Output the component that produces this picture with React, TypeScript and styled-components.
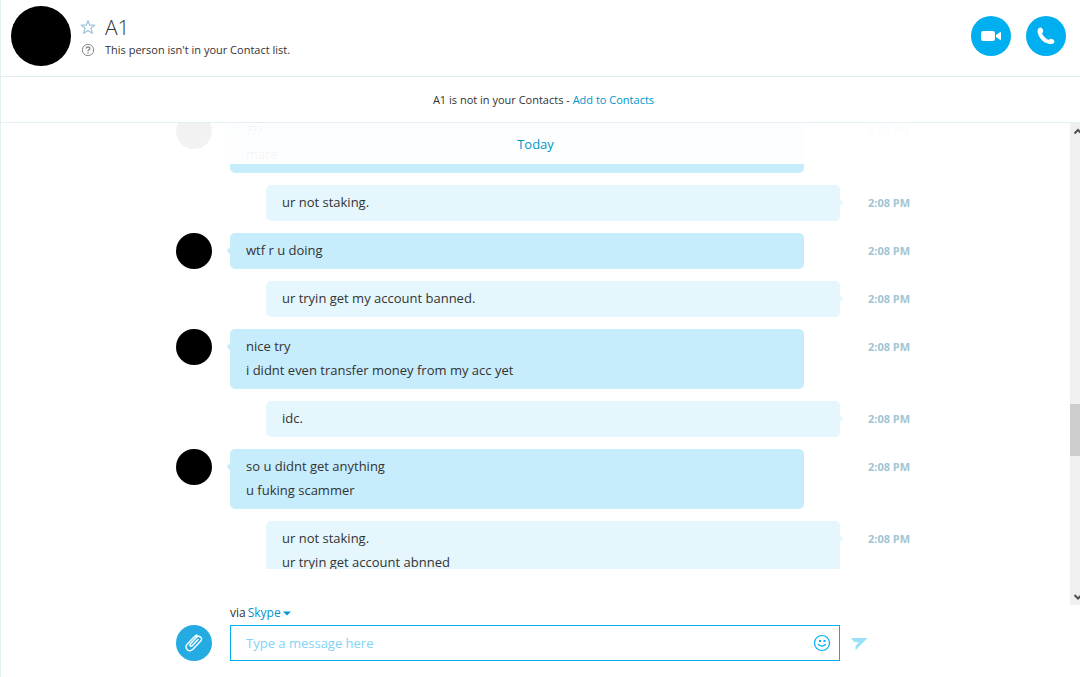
import React from "react";
import styled, { createGlobalStyle } from "styled-components";

const GlobalStyle = createGlobalStyle`
  *, *::before, *::after { box-sizing: border-box; }
  body {
    margin: 0;
    background: #fff;
    color: #333;
    font-family: "Open Sans", "Noto Sans", sans-serif;
    font-size: 13px;
    line-height: 24px;
  }
  button, input { font: inherit; }
`;

const Shell = styled.main`
  display: flex;
  flex-direction: column;
  height: 100vh;
  overflow: hidden;
  box-shadow: inset 1px 0 #e2eef2;
`;

const Header = styled.header`
  display: flex;
  align-items: flex-start;
  padding: 6px 14px 10px 11px;
  border-bottom: 1px solid #e2eef2;
`;

const Avatar = styled.div<{ $size: number }>`
  flex: none;
  width: ${(p) => p.$size}px;
  height: ${(p) => p.$size}px;
  border-radius: 50%;
  background: #000;
`;

const Person = styled.div`
  flex: 1;
  display: grid;
  grid-template-columns: 16px 1fr;
  grid-template-rows: 28px 18px;
  column-gap: 9px;
  align-items: center;
  margin: 7px 0 0 9px;
`;

const IconButton = styled.button`
  display: flex;
  padding: 0;
  border: 0;
  background: none;
`;

const Name = styled.h1`
  margin: 0;
  font-size: 21px;
  font-weight: 300;
  line-height: 28px;
`;

const Status = styled.p`
  margin: 0;
  font-size: 11px;
  line-height: 18px;
`;

const CallActions = styled.div`
  display: flex;
  gap: 15px;
  padding-top: 10px;
`;

const RoundButton = styled.button<{ $size: number; $color: string }>`
  display: grid;
  place-items: center;
  width: ${(p) => p.$size}px;
  height: ${(p) => p.$size}px;
  padding: 0;
  border: 0;
  border-radius: 50%;
  background: ${(p) => p.$color};
`;

const Notice = styled.p`
  margin: 0;
  padding: 11px 0 10px 7px;
  border-bottom: 1px solid #e2f1f5;
  font-size: 11px;
  text-align: center;
`;

const TextLink = styled.a`
  color: #0095cc;
  text-decoration: none;
`;

const Conversation = styled.section`
  flex: 1;
  min-height: 0;
  display: flex;
`;

const Viewport = styled.div`
  position: relative;
  flex: 1;
  min-width: 0;
  margin-bottom: 36px;
  overflow: hidden;
`;

const DayBanner = styled.div`
  position: absolute;
  inset: 0 0 auto 1px;
  z-index: 2;
  padding: 9px 0 8px;
  background: rgba(255, 255, 255, 0.95);
  color: #0095cc;
  text-align: center;
`;

const Messages = styled.ol`
  display: flex;
  flex-direction: column;
  gap: 12px;
  margin: -10px 0 0;
  padding: 0;
  list-style: none;
`;

const columns = `
  display: grid;
  grid-template-columns: minmax(72px, 1fr) minmax(0, 610px) minmax(72px, 1fr);
`;

const MessageRow = styled.li`
  ${columns}
`;

const Side = styled.div`
  display: flex;
  justify-content: flex-end;
  padding-right: 18px;
`;

const Bubble = styled.div<{ $mine: boolean }>`
  position: relative;
  margin: ${(p) => (p.$mine ? "0 0 0 36px" : "0 36px 0 0")};
  padding: 5px 16px 7px;
  border-radius: 5px;
  background: ${(p) => (p.$mine ? "#e5f6fd" : "#c7ecfc")};

  &::before {
    content: "";
    position: absolute;
    top: 14px;
    ${(p) => (p.$mine ? "right" : "left")}: -2px;
    width: 7px;
    height: 7px;
    background: inherit;
    transform: rotate(45deg);
  }
`;

const Line = styled.p`
  margin: 0;
`;

const Time = styled.time`
  padding: 6px 0 0 28px;
  color: #a2c4d4;
  font-size: 11px;
  font-weight: 700;
`;

const ScrollTrack = styled.div`
  flex: none;
  display: flex;
  flex-direction: column;
  width: 10px;
  overflow: hidden;
  background: #f0f0f0;

  svg { flex: none; }
`;

const TrackSpace = styled.div<{ $grow: number }>`
  flex: ${(p) => p.$grow};
`;

const Thumb = styled.div`
  height: 52px;
  background: #cdcdcd;
`;

const Composer = styled.form`
  ${columns}
  align-items: center;
  padding: 0 10px 16px 0;
`;

const Via = styled.div`
  grid-area: 1 / 2;
  display: flex;
  align-items: center;
  gap: 2px;
  height: 20px;
  padding-bottom: 4px;
  font-size: 12px;
`;

const ViaButton = styled.button`
  display: flex;
  align-items: center;
  gap: 2px;
  padding: 0;
  border: 0;
  background: none;
  color: #0095cc;
`;

const Attach = styled(Side)`
  grid-area: 2 / 1;
`;

const Field = styled.div`
  grid-area: 2 / 2;
  display: flex;
  align-items: center;
  height: 36px;
  padding: 0 8px 0 15px;
  border: 1px solid #00aff0;
`;

const MessageInput = styled.input`
  flex: 1;
  min-width: 0;
  padding: 0;
  border: 0;
  outline: 0;
  background: none;
  color: #333;

  &::placeholder {
    color: #80d4f7;
    opacity: 1;
  }
`;

const Send = styled.div`
  grid-area: 2 / 3;
  padding: 2px 0 0 11px;
`;

const StarIcon = () => (
  <svg width="16" height="16" viewBox="0 0 16 16" fill="none" stroke="#a2c8dc" strokeWidth="1.3" strokeLinejoin="round">
    <path d="M8 1.700 9.800 6.200h4.900L10.900 9.300l1.500 4.900L8 11.600l-4.400 2.600 1.500-4.900L1.300 6.200h4.900z" />
  </svg>
);

const HelpIcon = () => (
  <svg width="16" height="16" viewBox="0 0 16 16" fill="none" stroke="#8a8d90">
    <circle cx="8" cy="8" r="5.700" />
    <path d="M6.200 6.600C6.200 4.500 9.900 4.500 9.900 6.500 9.900 7.700 8 7.700 8 9.200" strokeWidth="1.400" />
    <path d="M8 10.200v1.300" strokeWidth="1.400" />
  </svg>
);

const VideoIcon = () => (
  <svg width="22" height="12" viewBox="0 0 22 12" fill="#fff">
    <rect x="1" y="1" width="14" height="10" rx="2" />
    <path d="M16 5 20 2.200q1-.5 1 .6v6.400q0 1.100-1 .6L16 7z" />
  </svg>
);

const PhoneIcon = () => (
  <svg width="20" height="20" viewBox="0 0 20 20" fill="#fff">
    <path d="M2.400 2.600Q4.500.6 6.300 2.500 8 5 6.700 6.500 5.900 7.300 6.300 8.300 8.500 12 11.900 13.700q.9.300 1.700-.4 1.500-1.200 3.600.2 2.100 1.500.9 3.300-1.300 1.700-4.600 1.200C7 16.700 2.700 12 1.600 6.300q-.3-2.500.8-3.700z" />
  </svg>
);

const ClipIcon = () => (
  <svg width="20" height="20" viewBox="0 0 20 20" fill="none" stroke="#fff" strokeWidth="1.400" strokeLinecap="round" strokeLinejoin="round">
    <path d="M14 6.500 8.200 12.700c-1.300 1.300-3.100-.3-1.900-1.700l6.200-6.700c2.800-2.700 6.700.9 4.200 3.800l-7.800 8.200c-3.900 3.500-9-.8-5.800-5L9.600 4.600q1.700-1.900 3.400-2.600" />
  </svg>
);

const SmileIcon = () => (
  <svg width="18" height="18" viewBox="0 0 18 18" fill="none" stroke="#00aff0" strokeWidth="1.200">
    <circle cx="9" cy="9" r="7.500" />
    <path d="M5.500 10.500q3.500 3.200 7 0" strokeLinecap="round" />
    <path d="M6 7h2M10.500 7h2" strokeWidth="2" />
  </svg>
);

const SendIcon = () => (
  <svg width="18" height="14" viewBox="0 0 18 14" fill="#99e0fb">
    <path d="M0 1h16.500L4.500 13.300V9L8 5.200 3 5z" />
  </svg>
);

const CaretIcon = () => (
  <svg width="8" height="5" viewBox="0 0 8 5" fill="#0095cc">
    <path d="M0 .5h8L4 4.500z" />
  </svg>
);

const ArrowIcon = ({ down }: { down?: boolean }) => (
  <svg width="17" height="17" viewBox="0 0 17 17" fill="none" stroke="#505050" strokeWidth="2">
    <path d={down ? "M4.500 7l3.500 3.500 3.500-3.500" : "M4.500 10.500L8 7l3.500 3.500"} />
  </svg>
);

type Message = { mine?: boolean; lines: string[] };

const messages: Message[] = [
  { lines: ["???", "mate"] },
  { mine: true, lines: ["ur not staking."] },
  { lines: ["wtf r u doing"] },
  { mine: true, lines: ["ur tryin get my account banned."] },
  { lines: ["nice try", "i didnt even transfer money from my acc yet"] },
  { mine: true, lines: ["idc."] },
  { lines: ["so u didnt get anything", "u fuking scammer"] },
  { mine: true, lines: ["ur not staking.", "ur tryin get account abnned"] },
];

export default function App() {
  return (
    <Shell>
      <GlobalStyle />
      <Header>
        <Avatar $size={60} />
        <Person>
          <IconButton aria-label="Add to favorites"><StarIcon /></IconButton>
          <Name>A1</Name>
          <HelpIcon />
          <Status>This person isn't in your Contact list.</Status>
        </Person>
        <CallActions>
          <RoundButton $size={40} $color="#00aff0" aria-label="Video call"><VideoIcon /></RoundButton>
          <RoundButton $size={40} $color="#00aff0" aria-label="Call"><PhoneIcon /></RoundButton>
        </CallActions>
      </Header>
      <Notice>
        A1 is not in your Contacts - <TextLink href="#add">Add to Contacts</TextLink>
      </Notice>
      <Conversation>
        <Viewport>
          <DayBanner>Today</DayBanner>
          <Messages>
            {messages.map((m, i) => (
              <MessageRow key={i}>
                <Side>{!m.mine && <Avatar $size={36} />}</Side>
                <Bubble $mine={!!m.mine}>
                  {m.lines.map((line) => <Line key={line}>{line}</Line>)}
                </Bubble>
                <Time>2:08 PM</Time>
              </MessageRow>
            ))}
          </Messages>
        </Viewport>
        <ScrollTrack aria-hidden="true">
          <ArrowIcon />
          <TrackSpace $grow={2} />
          <Thumb />
          <TrackSpace $grow={1} />
          <ArrowIcon down />
        </ScrollTrack>
      </Conversation>
      <Composer onSubmit={(e) => e.preventDefault()}>
        <Via>
          via <ViaButton type="button">Skype <CaretIcon /></ViaButton>
        </Via>
        <Attach>
          <RoundButton type="button" $size={36} $color="#24abe2" aria-label="Attach a file"><ClipIcon /></RoundButton>
        </Attach>
        <Field>
          <MessageInput type="text" aria-label="Message" placeholder="Type a message here" />
          <IconButton type="button" aria-label="Insert emoticon"><SmileIcon /></IconButton>
        </Field>
        <Send>
          <IconButton type="submit" aria-label="Send message"><SendIcon /></IconButton>
        </Send>
      </Composer>
    </Shell>
  );
}
